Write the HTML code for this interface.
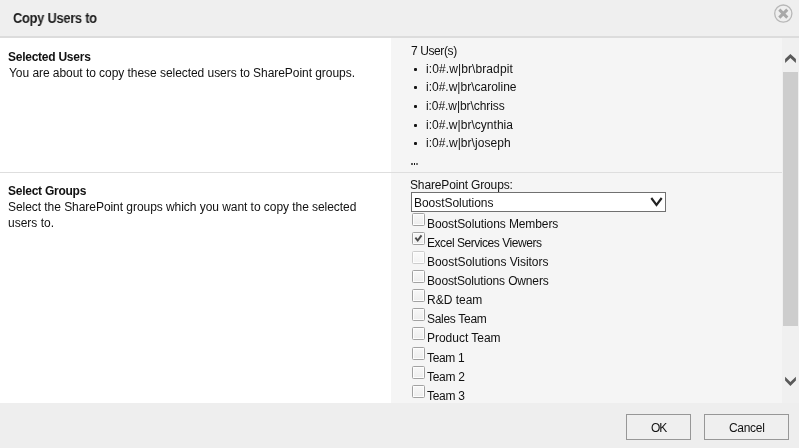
<!DOCTYPE html>
<html><head><meta charset="utf-8"><style>
html,body{margin:0;padding:0;}
body{width:799px;height:448px;overflow:hidden;position:relative;background:#fff;font-family:"Liberation Sans",sans-serif;}
.t{position:absolute;white-space:nowrap;will-change:transform;}
.b{position:absolute;}
.cb{position:absolute;width:11px;height:11px;border:1px solid #a2a2a2;border-radius:1.5px;box-shadow:inset 0 0 0 1px #fdfdfd;background:linear-gradient(#f8f8f8,#ededed);}
.btn{position:absolute;box-sizing:border-box;border:1px solid #979797;background:#efefef;}
</style></head><body>
<div class="b" style="left:0;top:0;width:799px;height:36px;background:#efefef"></div>
<div class="b" style="left:0;top:36px;width:799px;height:2px;background:#dcdcdc"></div>
<div class="t" style="left:13px;top:9.65px;font-size:14px;line-height:17px;font-weight:bold;color:#1c1c1c;letter-spacing:-0.3px;transform:scaleX(0.92);transform-origin:0 0;">Copy Users to</div>
<svg class="b" style="left:772px;top:2px" width="24" height="24" viewBox="0 0 24 24">
<circle cx="11.3" cy="11.6" r="8.6" fill="none" stroke="#b8b8b8" stroke-width="1.3"/>
<path d="M7.3 7.6 L15.3 15.6 M15.3 7.6 L7.3 15.6" stroke="#a9a9a9" stroke-width="3"/>
</svg>
<div class="b" style="left:391px;top:38px;width:391px;height:365px;background:#f5f5f5"></div>
<div class="b" style="left:782px;top:38px;width:17px;height:365px;background:#f0f0f0"></div>
<div class="b" style="left:0;top:172px;width:782px;height:1px;background:#dedede"></div>
<div class="b" style="left:0;top:403px;width:799px;height:45px;background:#eeeeee"></div>
<div class="b" style="left:783px;top:72px;width:15px;height:254px;background:#cdcdcd"></div>
<svg class="b" style="left:782px;top:50px" width="17" height="16" viewBox="0 0 17 16">
<path d="M3.1 9.1 L8.4 3.9 L13.9 9.1 L13.9 12.9 L8.4 8.05 L3.1 12.9 Z" fill="#5a5a5a"/></svg>
<svg class="b" style="left:782px;top:372px" width="17" height="16" viewBox="0 0 17 16">
<path d="M3.1 4.8 L8.4 10 L13.9 4.8 L13.9 8.6 L8.4 13.9 L3.1 8.6 Z" fill="#5a5a5a"/></svg>
<div class="t" style="left:8px;top:49.84px;font-size:12px;line-height:14px;font-weight:bold;color:#111;letter-spacing:-0.25px;">Selected Users</div>
<div class="t" style="left:9px;top:65.84px;font-size:12px;line-height:14px;font-weight:normal;color:#111;letter-spacing:-0.05px;">You are about to copy these selected users to SharePoint groups.</div>
<div class="t" style="left:8px;top:183.84px;font-size:12px;line-height:14px;font-weight:bold;color:#111;letter-spacing:-0.25px;">Select Groups</div>
<div class="t" style="left:8.4px;top:199.84px;font-size:12px;line-height:14px;font-weight:normal;color:#111;letter-spacing:-0.05px;">Select the SharePoint groups which you want to copy the selected</div>
<div class="t" style="left:8.4px;top:215.84px;font-size:12px;line-height:14px;font-weight:normal;color:#111;letter-spacing:0px;">users to.</div>
<div class="t" style="left:411px;top:43.84px;font-size:12px;line-height:14px;font-weight:normal;color:#111;letter-spacing:-0.4px;">7 User(s)</div>
<div class="b" style="left:414px;top:68.0px;width:3px;height:3px;border-radius:1px;background:#151515"></div>
<div class="t" style="left:426px;top:61.84px;font-size:12px;line-height:14px;font-weight:normal;color:#111;letter-spacing:0.1px;">i:0#.w|br\bradpit</div>
<div class="b" style="left:414px;top:86.0px;width:3px;height:3px;border-radius:1px;background:#151515"></div>
<div class="t" style="left:426px;top:79.84px;font-size:12px;line-height:14px;font-weight:normal;color:#111;letter-spacing:0.0px;">i:0#.w|br\caroline</div>
<div class="b" style="left:414px;top:105.0px;width:3px;height:3px;border-radius:1px;background:#151515"></div>
<div class="t" style="left:426px;top:98.84px;font-size:12px;line-height:14px;font-weight:normal;color:#111;letter-spacing:-0.07px;">i:0#.w|br\chriss</div>
<div class="b" style="left:414px;top:124.0px;width:3px;height:3px;border-radius:1px;background:#151515"></div>
<div class="t" style="left:426px;top:117.84px;font-size:12px;line-height:14px;font-weight:normal;color:#111;letter-spacing:0.03px;">i:0#.w|br\cynthia</div>
<div class="b" style="left:414px;top:142.0px;width:3px;height:3px;border-radius:1px;background:#151515"></div>
<div class="t" style="left:426px;top:135.84px;font-size:12px;line-height:14px;font-weight:normal;color:#111;letter-spacing:0.05px;">i:0#.w|br\joseph</div>
<div class="b" style="left:411px;top:163px;width:2px;height:2px;background:#5a5a5a"></div>
<div class="b" style="left:414px;top:163px;width:1px;height:2px;background:#111"></div>
<div class="b" style="left:416px;top:163px;width:2px;height:2px;background:#777"></div>
<div class="t" style="left:410px;top:177.84px;font-size:12px;line-height:14px;font-weight:normal;color:#111;letter-spacing:-0.15px;">SharePoint Groups:</div>
<div class="b" style="left:411px;top:192px;width:253px;height:18px;border:1px solid #707070;background:#fff"></div>
<div class="t" style="left:414px;top:195.84px;font-size:12px;line-height:14px;font-weight:normal;color:#111;letter-spacing:-0.05px;">BoostSolutions</div>
<svg class="b" style="left:648px;top:194px" width="16" height="16" viewBox="0 0 16 16">
<path d="M3.3 4 L8.5 11 L13.7 4" fill="none" stroke="#222" stroke-width="2.1"/></svg>
<div class="cb" style="left:412px;top:213px;"></div>
<div class="t" style="left:427px;top:216.84px;font-size:12px;line-height:14px;font-weight:normal;color:#111;letter-spacing:-0.1px;">BoostSolutions Members</div>
<div class="cb" style="left:412px;top:232px;"></div>
<svg class="b" style="left:412px;top:232px" width="13" height="13" viewBox="0 0 13 13">
<path d="M3.4 5.7 L5.7 8.5 L9.5 3.4" fill="none" stroke="#4a4a4a" stroke-width="1.9"/></svg>
<div class="t" style="left:427px;top:235.84px;font-size:12px;line-height:14px;font-weight:normal;color:#111;letter-spacing:-0.45px;">Excel Services Viewers</div>
<div class="cb" style="left:412px;top:251px;border-color:#cdcdcd;background:linear-gradient(#fafafa,#f3f3f3);"></div>
<div class="t" style="left:427px;top:254.84px;font-size:12px;line-height:14px;font-weight:normal;color:#111;letter-spacing:-0.05px;">BoostSolutions Visitors</div>
<div class="cb" style="left:412px;top:270px;"></div>
<div class="t" style="left:427px;top:273.84px;font-size:12px;line-height:14px;font-weight:normal;color:#111;letter-spacing:-0.15px;">BoostSolutions Owners</div>
<div class="cb" style="left:412px;top:289px;"></div>
<div class="t" style="left:427px;top:292.84px;font-size:12px;line-height:14px;font-weight:normal;color:#111;letter-spacing:0px;">R&amp;D team</div>
<div class="cb" style="left:412px;top:308px;"></div>
<div class="t" style="left:427px;top:311.84px;font-size:12px;line-height:14px;font-weight:normal;color:#111;letter-spacing:-0.3px;">Sales Team</div>
<div class="cb" style="left:412px;top:327px;"></div>
<div class="t" style="left:427px;top:330.84px;font-size:12px;line-height:14px;font-weight:normal;color:#111;letter-spacing:-0.02px;">Product Team</div>
<div class="cb" style="left:412px;top:347px;"></div>
<div class="t" style="left:427px;top:350.84px;font-size:12px;line-height:14px;font-weight:normal;color:#111;letter-spacing:-0.35px;">Team 1</div>
<div class="cb" style="left:412px;top:366px;"></div>
<div class="t" style="left:427px;top:369.84px;font-size:12px;line-height:14px;font-weight:normal;color:#111;letter-spacing:-0.3px;">Team 2</div>
<div class="cb" style="left:412px;top:385px;"></div>
<div class="t" style="left:427px;top:388.84px;font-size:12px;line-height:14px;font-weight:normal;color:#111;letter-spacing:-0.3px;">Team 3</div>
<div class="btn" style="left:626px;top:414px;width:65px;height:26px"></div>
<div class="t" style="left:650.5px;top:420.84px;font-size:12px;line-height:14px;font-weight:normal;color:#111;letter-spacing:-1px;">OK</div>
<div class="btn" style="left:704px;top:414px;width:85px;height:26px"></div>
<div class="t" style="left:729px;top:420.84px;font-size:12px;line-height:14px;font-weight:normal;color:#111;letter-spacing:-0.3px;">Cancel</div>
</body></html>
